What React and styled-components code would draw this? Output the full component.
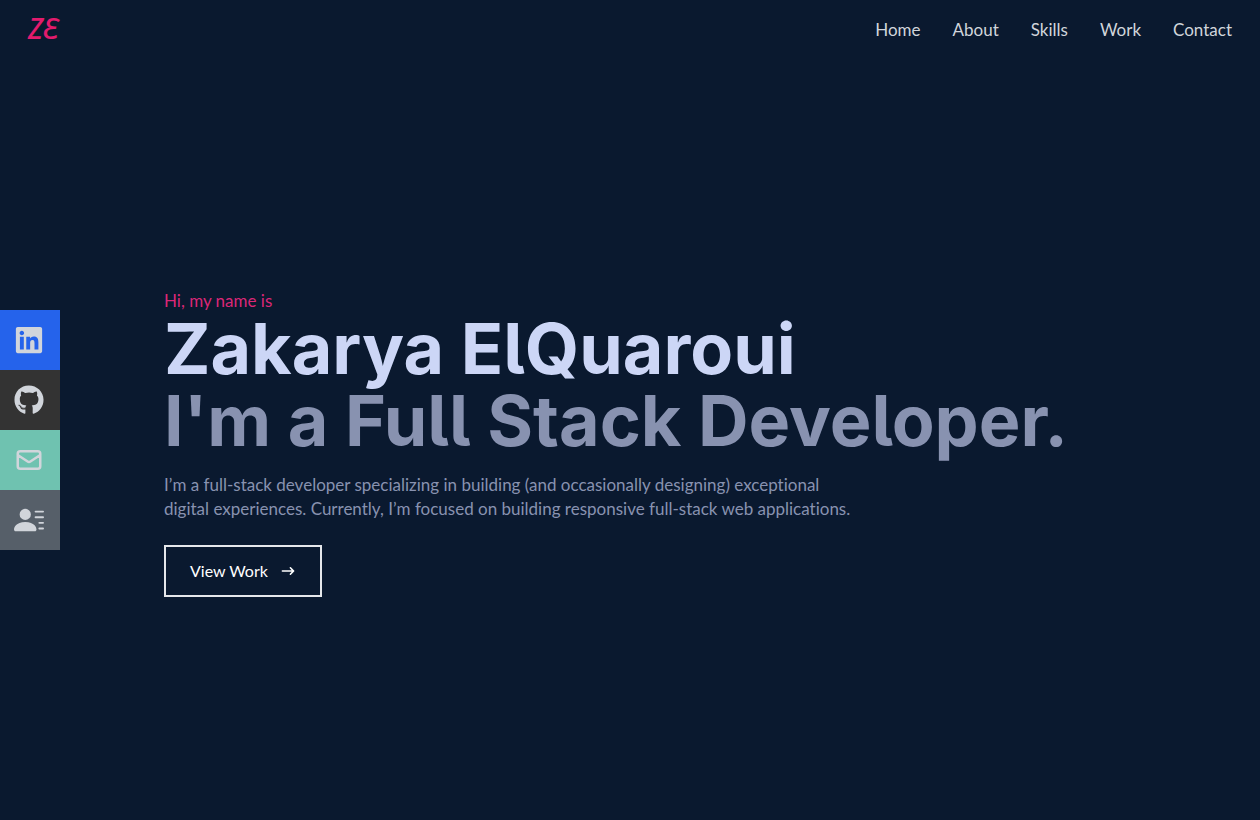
import React from "react";
import styled, { createGlobalStyle } from "styled-components";
import { FaLinkedin, FaGithub } from "react-icons/fa";
import { HiOutlineMail, HiArrowNarrowRight } from "react-icons/hi";
import { BsFillPersonLinesFill } from "react-icons/bs";

const GlobalStyle = createGlobalStyle`
  *, *::before, *::after { box-sizing: border-box; }
  body {
    margin: 0;
    background: #0a192f;
    color: #d1d5db;
    font-family: Lato, "Open Sans", sans-serif;
    font-size: 17px;
    line-height: 24px;
    font-variant-ligatures: none;
  }
  h1, h2, p, ul { margin: 0; padding: 0; }
  ul { list-style: none; }
  a { color: inherit; text-decoration: none; }
`;

const Page = styled.div`
  min-height: 100vh;
  display: flex;
  flex-direction: column;
`;

const Header = styled.header`
  height: 60px;
  padding: 0 28px;
  display: flex;
  align-items: center;
  justify-content: space-between;
`;

const Logo = styled.a`
  color: #e31b6d;
  font-family: "Noto Sans", sans-serif;
  font-style: italic;
  font-weight: 500;
  font-size: 28px;
  line-height: 36px;
  padding-bottom: 4px;
`;

const NavList = styled.ul`
  display: flex;
  gap: 32px;
`;

const Hero = styled.main`
  flex: 1;
  display: grid;
  grid-template-columns: 60px minmax(0, 1fr) 60px;
  align-items: center;
`;

const SocialList = styled.ul`
  padding-bottom: 20px;
`;

const SocialLink = styled.a`
  height: 60px;
  padding-left: 14px;
  display: flex;
  align-items: center;
  background: ${({ $color }) => $color};
`;

const Intro = styled.section`
  width: 100%;
  max-width: 1000px;
  margin: 0 auto;
  padding: 6px 34px 0;
`;

const Greeting = styled.p`
  color: #db2777;
`;

const Name = styled.h1`
  color: #ccd6f6;
  font-family: Inter, sans-serif;
  font-size: 70px;
  line-height: 72px;
  font-weight: 700;
  font-feature-settings: "cv05";
`;

const Role = styled(Name).attrs({ as: "h2" })`
  color: #8892b0;
`;

const Summary = styled.p`
  max-width: 700px;
  padding: 16px 0;
  color: #8892b0;
`;

const WorkButton = styled.button`
  margin-top: 8px;
  height: 52px;
  padding: 0 24px;
  display: flex;
  align-items: center;
  gap: 12px;
  color: #fff;
  background: transparent;
  border: 2px solid #e5e7eb;
  font: inherit;
  font-size: 16px;
  cursor: pointer;
`;

const sections = ["Home", "About", "Skills", "Work", "Contact"];

const socials = [
  { label: "LinkedIn", color: "#2563eb", Icon: FaLinkedin },
  { label: "GitHub", color: "#333333", Icon: FaGithub },
  { label: "Email", color: "#6fc2b0", Icon: HiOutlineMail },
  { label: "Resume", color: "#565f69", Icon: BsFillPersonLinesFill },
];

export default function App() {
  return (
    <Page>
      <GlobalStyle />
      <Header>
        <Logo href="#home" aria-label="ZE">ZƐ</Logo>
        <nav>
          <NavList>
            {sections.map((name) => (
              <li key={name}>
                <a href={`#${name.toLowerCase()}`}>{name}</a>
              </li>
            ))}
          </NavList>
        </nav>
      </Header>
      <Hero id="home">
        <SocialList>
          {socials.map(({ label, color, Icon }) => (
            <li key={label}>
              <SocialLink href={`#${label.toLowerCase()}`} aria-label={label} $color={color}>
                <Icon size={30} />
              </SocialLink>
            </li>
          ))}
        </SocialList>
        <Intro>
          <Greeting>Hi, my name is</Greeting>
          <Name>Zakarya ElQuaroui</Name>
          <Role>I'm a Full Stack Developer.</Role>
          <Summary>
            I’m a full-stack developer specializing in building (and occasionally designing)
            exceptional digital experiences. Currently, I’m focused on building responsive
            full-stack web applications.
          </Summary>
          <WorkButton type="button">
            View Work
            <HiArrowNarrowRight size={16} />
          </WorkButton>
        </Intro>
      </Hero>
    </Page>
  );
}
